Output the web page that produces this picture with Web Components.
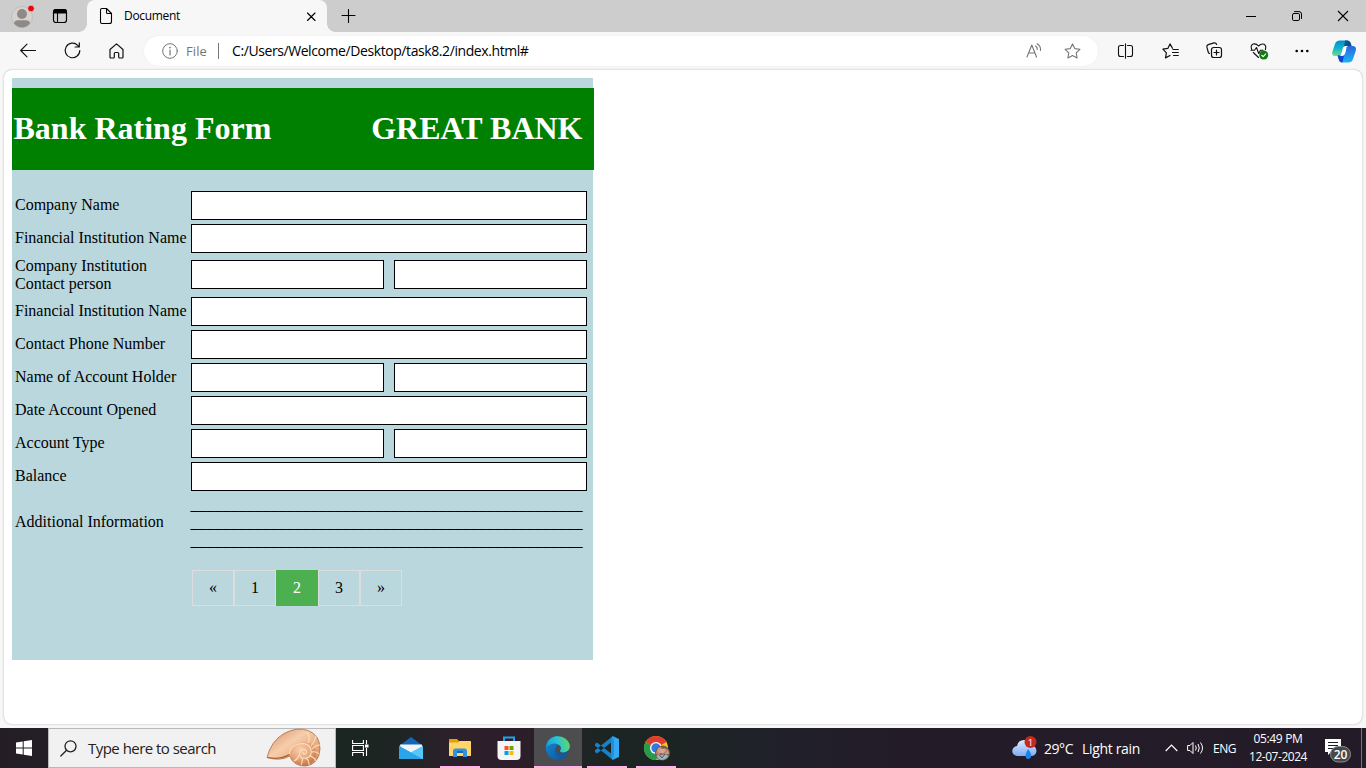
<!DOCTYPE html>
<html lang="en">
<head>
<meta charset="utf-8">
<title>Document</title>
<style>
html,body{margin:0;padding:0;width:1366px;height:768px;overflow:hidden;background:#f7f7f7}
</style>
</head>
<body>
<desktop-screen></desktop-screen>
<script>
const define=(name,css,html,setup)=>{
  const t=document.createElement('template');
  t.innerHTML=`<style>*{box-sizing:border-box}${css}</style>${html}`;
  customElements.define(name,class extends HTMLElement{
    connectedCallback(){
      if(this.shadowRoot)return;
      this.attachShadow({mode:'open'}).append(t.content.cloneNode(true));
      if(setup)setup(this,this.shadowRoot);
    }
  });
};

/* Text whose letter spacing is adjusted to occupy the width given in "w". */
define('fit-text',':host{display:block;white-space:pre;flex:none}span{display:inline-block}','<span><slot></slot></span>',(el,r)=>{
  const w=+el.getAttribute('w'),s=r.querySelector('span');
  const n=s.getBoundingClientRect().width;
  const len=el.textContent.length;
  el.style.width=w+'px';
  s.style.letterSpacing=((w-n)/len)+'px';
});

const S='fill="none" stroke="currentColor" stroke-linecap="round" stroke-linejoin="round"';
const ICONS={
person:[24,24,`<circle cx="12" cy="12" r="10.500" fill="#d6d3cf" stroke="#c2bfba"/><circle cx="12" cy="9" r="5" fill="#8d8a87"/><path d="M4 18.500Q4.500 15.200 8 15.200H16Q19.500 15.200 20 18.500Q16.500 22.500 12 22.500T4 18.500Z" fill="#8d8a87"/><circle cx="21" cy="3.500" r="3.300" fill="#e30613" stroke="#f1dede" stroke-width=".6"/>`],
workspaces:[16,16,`<rect x="1.500" y="1.500" width="13" height="13" rx="2.500" ${S} stroke-width="1.200"/><path d="M1 5.500V4Q1 1 4 1H12Q15 1 15 4V5.500Z" fill="#000"/><path d="M5.500 5V14.500" ${S} stroke-width="1.100"/>`],
page:[14,18,`<path d="M3 1.500H7.500L12.500 6.500V14.500Q12.500 16.500 10.500 16.500H3Q1.500 16.500 1.500 15V3Q1.500 1.500 3 1.500ZM7.500 1.500V5.500Q7.500 6.500 8.500 6.500H12.500" ${S} stroke-width="1.100"/>`],
close:[10,10,`<path d="M1.500 1L9 8.500M9 1L1.500 8.500" ${S} stroke-width="1.150"/>`],
plus:[14,14,`<path d="M7.500 .5V13.500M1 6.500H14" ${S} stroke-width="1.100"/>`],
min:[10,10,`<path d="M0 5.500H10" stroke="#000"/>`],
restore:[10,10,`<rect x=".5" y="2.500" width="7" height="7" rx="1.300" ${S}/><path d="M2.500 .6H7Q9.500 .6 9.500 3V7.500" ${S}/>`],
x:[10,10,`<path d="M0 0L10 10M10 0L0 10" stroke="#000" stroke-width="1.100"/>`],
back:[16,14,`<path d="M15.500 6.500H.8M7 .2L.7 6.500L7 12.800" ${S} stroke-width="1.100"/>`],
reload:[17,17,`<path d="M15.800 8.500A7.300 7.300 0 1 1 13.700 3.300L15.200 4.800M15.300 .8V5H11.100" ${S} stroke-width="1.200"/>`],
home:[15,16,`<path d="M1 6.500L7.500 .9L14 6.500V14Q14 15 13 15H10.500Q9.700 15 9.700 14V10.500Q9.700 9.500 8.700 9.500H6.300Q5.300 9.500 5.300 10.500V14Q5.300 15 4.300 15H2Q1 15 1 14Z" ${S} stroke-width="1.200"/>`],
info:[16,16,`<circle cx="8" cy="8" r="7.300" ${S} stroke-width="1"/><path d="M8 7V12" ${S} stroke-width="1.200"/><circle cx="8" cy="4.600" r=".9" fill="currentColor"/>`],
read:[16,16,`<path d="M1 14L5.800 2L10.500 14M2.700 10H9" ${S} stroke-width="1.100"/><path d="M9.500 3Q11.500 4 11.300 6.500M11 .8Q15 3 14.500 7.500" ${S} stroke-width="1.100"/>`],
star:[17,16,`<path d="M8.500 1L10.800 5.600L15.900 6.300L12.200 9.900L13.100 15L8.500 12.600L3.900 15L4.800 9.900L1.100 6.300L6.200 5.600Z" ${S} stroke-width="1.100"/>`],
split:[15,16,`<path d="M5.500 2.500H2.500Q.5 2.500 .5 4.500V11.500Q.5 13.500 2.500 13.500H5.500M9.500 2.500H12.500Q14.500 2.500 14.500 4.500V11.500Q14.500 13.500 12.500 13.500H9.500M7.500 .7V15.300" ${S} stroke-width="1.100"/>`],
favs:[17,16,`<path d="M10.500 5.300L8 .9L5.800 5.400L.9 6.200L4.400 9.800L3.500 14.900L8 12.500M11 6.500H16.300M10.500 9.500H16.300M11.500 12.500H16.300" ${S} stroke-width="1.200"/>`],
collections:[17,17,`<rect x="5.500" y="5.500" width="10" height="10" rx="2.300" ${S} stroke-width="1.200"/><path d="M10.500 8V13M8 10.500H13M3.500 11.500Q2.500 11.200 2.200 10L.9 5.200Q.5 3.300 2.200 2.600L8 .9Q9.900 .5 10.700 2.500" ${S} stroke-width="1.200"/>`],
health:[19,17,`<path d="M1.800 6.500Q0 2.500 3.200 1.100Q6 .2 8.500 3Q11.500 .2 14 1.200Q16.600 2.600 15.400 6.500M1 7.300H4.500L6.500 4.500L8.700 10.500L10.500 7.300H13M3.300 9.500L8.500 14.500" ${S} stroke-width="1.100"/><circle cx="13.700" cy="12" r="4.500" fill="#107c10"/><path d="M11.500 12L13.200 13.600L16 10.600" fill="none" stroke="#fff" stroke-width="1.100"/>`],
dots:[14,4,`<circle cx="1.700" cy="2" r="1.300"/><circle cx="7" cy="2" r="1.300"/><circle cx="12.300" cy="2" r="1.300"/>`],
copilot:[24,23,`<defs><linearGradient id="a" x1="0" y1="0" x2="0" y2="1"><stop stop-color="#008fd0"/><stop offset=".5" stop-color="#10b5c8"/><stop offset="1" stop-color="#78dc8c"/></linearGradient><linearGradient id="b" x1="0" y1="0" x2="0" y2="1"><stop stop-color="#2d65d8"/><stop offset="1" stop-color="#18b5fb"/></linearGradient></defs><path d="M8 .5H15Q18 .5 19 4L20 8H13L8 16H3Q-.5 16 .3 12L3 4Q4 .5 8 .5Z" fill="url(#a)"/><path d="M13 .5H15Q18 .5 19 4L20 8H12Z" fill="#08528c"/><path d="M6 15L13 14L15 6H21Q25 6.500 23.700 11L21 19Q20 22.500 16 22.500H10Q7.500 22.500 6.700 19Z" fill="url(#b)"/><path d="M5.500 15.500H12L10.500 22.500Q7.500 22.500 6.600 19Z" fill="#1445ce"/><path d="M11 7.500Q12 6 13.500 6H16Q14.500 6.500 14 8.500L12.700 14Q12 16 10 16H7.500Q9 15.500 9.500 13.500Z" fill="#fff"/>`],
win:[16,16,`<path d="M0 2.400L6.700 1.400V7.500H0ZM7.700 1.300L16 0V7.500H7.700ZM0 8.500H6.700V14.600L0 13.600ZM7.700 8.500H16V16L7.700 14.700Z" fill="#fff"/>`],
search:[17,17,`<circle cx="10.500" cy="6.300" r="5.500" ${S} stroke-width="1.300"/><path d="M6.600 10.200L.8 16" ${S} stroke-width="1.300"/>`],
shell:[56,40,`<defs><radialGradient id="s" cx=".4" cy=".3" r=".8"><stop stop-color="#f9cfae"/><stop offset=".5" stop-color="#e9a57f"/><stop offset="1" stop-color="#b8653d"/></radialGradient><linearGradient id="t" x1="0" y1="0" x2="1" y2="1"><stop stop-color="#d18d61"/><stop offset=".4" stop-color="#f7cdac"/><stop offset="1" stop-color="#d88658"/></linearGradient></defs><path d="M1 29.500Q5 13 18 5.500Q31-1.500 42 2.500Q54 7 54 21Q53 36 40 38Q28 38.500 23.500 28Q15 33.500 1 29.500Z" fill="url(#t)" stroke="#ae6d43" stroke-width=".8"/><path d="M23.500 28Q23 17 34 15Q43 12 48 19Q52 25 48 32Q44 38 38 38Q28 37 23.500 28Z" fill="url(#s)"/><path d="M23.500 26Q24 18 33 16Q43 14 45 22Q46 29 40 30Q34 31 33.500 26Q34 21 38.500 21.500Q42 23 39.500 26Q37 27 37 24M42 15Q45 10 41 4M45 18Q49 13 50 8M46 21Q50 17 54 17M46 24Q50 23 53 26M44 28Q48 29 50 33M40 30Q43 32 43 37M36 30Q37 33 35 37M33 27Q32 31 28 33" fill="none" stroke="#fbe3b4" stroke-width="1.050"/><path d="M1.500 29.500Q14 32 23.500 26.500" fill="none" stroke="#a65e35" stroke-width="1.200"/>`],
task:[17,16,`<path d="M.6 0V3.500H11.400V0M.6 16V12.500H11.400V16M.6 5.500H11.400V10.500H.6ZM14.500 0V4M14.500 8V16" fill="none" stroke="#fff" stroke-width="1.100"/><rect x="13" y="4.500" width="3.500" height="3" fill="#fff"/>`],
mail:[24,24,`<path d="M0 10L12 1L24 10V21H0Z" fill="#1267b6"/><path d="M1 8.500H23V15L12 21L2 15Z" fill="#f4f4f6"/><path d="M0 10L12 16.500L24 10V23H0Z" fill="#37b7f2"/><path d="M0 10L24 23H0Z" fill="#2ba4ea"/><path d="M24 10V23L12 16.500Z" fill="#55c8f8"/>`],
folder:[22,20,`<path d="M0 1.500Q0 1 .7 1H8L10 3H21Q22 3 22 4V18H0Z" fill="#e6a000"/><path d="M0 4.500H9L11 3H21Q22 3 22 4V17Q22 18 21 18H0Z" fill="#ffd667"/><path d="M4 19V13Q4 10.500 6.500 10.500H16Q18 10.500 18 13V19H14V15H8V19Z" fill="#3193dc"/><path d="M8 13H14V15H8Z" fill="#166bb2"/>`],
store:[24,24,`<path d="M7 6V1.500H17V6" fill="none" stroke="#20a2e5" stroke-width="2"/><path d="M.5 5H23.500V20Q23.500 24 19.500 24H4.500Q.5 24 .5 20Z" fill="#f5f5f5"/><rect x="7.500" y="10" width="4" height="4" fill="#f35325"/><rect x="12.500" y="10" width="4" height="4" fill="#67a900"/><rect x="7.500" y="15" width="4" height="4" fill="#00a1e9"/><rect x="12.500" y="15" width="4" height="4" fill="#ffb900"/>`],
edge:[24,24,`<defs><linearGradient id="e" x1="0" y1=".5" x2="1" y2=".3"><stop stop-color="#1b9de2"/><stop offset=".5" stop-color="#2ac4d6"/><stop offset="1" stop-color="#63dc50"/></linearGradient><linearGradient id="f" x1="0" y1="0" x2="1" y2="1"><stop stop-color="#168ed8"/><stop offset="1" stop-color="#0b4e93"/></linearGradient></defs><path d="M12 0A12 12 0 1 0 22.400 17.500Q23 16 21 16.500Q24 15 22 8Z" fill="url(#f)"/><path d="M.1 11Q1 2 10 .2Q20-.5 23.500 8Q25 14 19.500 16Q16 17 14 15.400Q13.500 14.800 14.500 13.500Q15.500 10.500 12.500 8.500Q6 5.500 .1 11Z" fill="url(#e)"/><path d="M9.500 13Q9.500 10 11.500 9.500Q14.700 9 14.900 12Q14.900 13.500 14 14.500Q13.500 16 16 16.800Q19 17.500 22.400 15.700L22.400 17.300Q20 18.800 16.500 18.500Q10 17.500 9.500 13Z" fill="#4c4c4e"/><path d="M9 12.500Q8 20 15.500 21.500Q19 21 21.500 18.300Q17 20 13.500 18Q9.800 16 9 12.500Z" fill="#0d5ca6"/>`],
code:[24,24,`<path d="M0 8L2 6.500L18 19V24L0 9.700ZM0 16L2 17.500L18 5V0L0 14.300Z" fill="#1682cb"/><path d="M17.500 0L24 3V21L17.500 24Z" fill="#32a9f4"/><path d="M17.500 0L19 5V19L17.500 24L16 22V2Z" fill="#238fd6"/>`],
chrome:[26,25,`<circle cx="12" cy="12" r="12" fill="#fbc116"/><path d="M12 12L1.600 6A12 12 0 0 1 22.400 6Z" fill="#e33b2e"/><path d="M12 12L1.600 6A12 12 0 0 0 12 24L17 15Z" fill="#269b48"/><circle cx="12" cy="12" r="6" fill="#fff"/><circle cx="12" cy="12" r="4.700" fill="#3478e5"/><circle cx="18.500" cy="17" r="7.500" fill="#755b4d"/><path d="M14 12L17 11L18 16L14 19L12 17ZM20 12L24 14L25 18L21 18Z" fill="#c99c88"/><circle cx="18.500" cy="15" r="2.500" fill="#d6a98e"/><path d="M12.500 20Q14 17 17 19Q22 17 24.500 20Q22 23.500 18 24Q14 23.500 12.500 20Z" fill="#9bb9b9"/><path d="M13 16L16 20M20 18L23 14" stroke="#ca7470" stroke-width="1.500"/><path d="M15.500 19L18 22L21 18" stroke="#504d78" fill="none"/>`],
weather:[28,24,`<defs><linearGradient id="w" x1="0" y1="0" x2="0" y2="1"><stop stop-color="#dceaff"/><stop offset="1" stop-color="#7facf3"/></linearGradient></defs><path d="M5 20Q0 19 .3 14.500Q1 10.500 5 10Q6 4 12 4Q17 4 18.500 9Q24 9.500 24.500 15Q24 20 19 20Z" fill="url(#w)"/><path d="M16 13Q20 18 19 21Q17.500 24 14.500 22.500Q12 20 16 13Z" fill="#1686ea"/><circle cx="18.500" cy="6" r="6" fill="#c42b1c"/><text x="18.500" y="9.500" text-anchor="middle" font-family="Open Sans,sans-serif" font-size="9.500" fill="#fff">1</text>`],
caret:[13,8,`<path d="M.7 7L6.500 1L12.300 7" fill="none" stroke="#fff" stroke-width="1.200"/>`],
speaker:[17,14,`<path d="M.6 4.500H3L6 1.500V12.500L3 9.500H.6Z" fill="none" stroke="#fff"/><path d="M8.500 4.500Q10 7 8.500 9.500M11 3Q13.500 7 11 11M13.500 1.500Q17.500 7 13.500 12.500" fill="none" stroke="#fff"/>`],
notif:[27,26,`<path d="M0 1H16V14H6L3 17V14H0Z" fill="#fff"/><path d="M3 4.500H13M3 7.500H13M3 10.500H9" stroke="#211c28"/><rect x="5.500" y="8.500" width="20" height="15.500" rx="7.700" fill="#46484b" stroke="#898b8d"/><text x="15.500" y="20.500" text-anchor="middle" font-family="Open Sans,sans-serif" font-weight="600" font-size="12" fill="#fff">20</text>`]
};
define('ui-icon',':host{display:block;flex:none}svg{display:block;overflow:visible}','<div></div>',(el,r)=>{
  const [w,h,b]=ICONS[el.getAttribute('name')];
  r.querySelector('div').innerHTML=`<svg width="${w}" height="${h}" viewBox="0 0 ${w} ${h}">${b}</svg>`;
});

define('title-bar',`:host{display:flex;height:32px;background:#cdcdcd;color:#000;font:12px "Open Sans",sans-serif;align-items:center}
.tab{width:240px;height:32px;background:#f7f7f7;border-radius:8px 8px 0 0;display:flex;align-items:center;padding-left:12px;margin-left:19px;position:relative}
.tab::before,.tab::after{content:"";position:absolute;bottom:0;width:8px;height:8px}
.tab::before{left:-8px;background:radial-gradient(circle at 0 0,transparent 7.500px,#f7f7f7 8px)}
.tab::after{right:-8px;background:radial-gradient(circle at 100% 0,transparent 7.500px,#f7f7f7 8px)}`,
`<ui-icon name="person" style="margin-left:10px;margin-top:1px"></ui-icon><ui-icon name="workspaces" style="margin-left:18px"></ui-icon>
<div class="tab"><ui-icon name="page"></ui-icon><fit-text w="56" style="margin-left:11px;margin-top:-1px">Document</fit-text><ui-icon name="close" style="margin-left:126px;margin-top:1px"></ui-icon></div>
<ui-icon name="plus" style="margin-left:14px"></ui-icon>
<ui-icon name="min" style="margin-left:auto"></ui-icon><ui-icon name="restore" style="margin-left:36px"></ui-icon><ui-icon name="x" style="margin:0 18px 0 36px"></ui-icon>`);

define('tool-bar',`:host{display:flex;height:38px;align-items:center;background:#f7f7f7;font:14px "Open Sans",sans-serif;color:#111}
.address{display:flex;align-items:center;width:954px;height:30px;border-radius:15px;background:#fff;margin-left:20px;padding:0 17px 0 18px;color:#767676;box-shadow:0 0 2px #e8e8e8}
i{width:1px;height:16px;background:#767676;margin:0 13px 0 11px}`,
`<ui-icon name="back" style="margin-left:20px"></ui-icon><ui-icon name="reload" style="margin-left:27.500px;margin-top:-1px"></ui-icon><ui-icon name="home" style="margin-left:28.500px;margin-top:-1px"></ui-icon>
<div class="address"><ui-icon name="info"></ui-icon><fit-text w="21" style="font-size:13px;margin-left:8px">File</fit-text><i></i><fit-text w="296.500" style="color:#000;margin-top:-1px">C:/Users/Welcome/Desktop/task8.2/index.html#</fit-text><ui-icon name="read" style="margin-left:auto;margin-top:-1px"></ui-icon><ui-icon name="star" style="margin-left:22px"></ui-icon></div>
<ui-icon name="split" style="margin-left:20px"></ui-icon><ui-icon name="favs" style="margin-left:29px"></ui-icon><ui-icon name="collections" style="margin-left:27px;margin-top:-1px"></ui-icon><ui-icon name="health" style="margin-left:27px"></ui-icon><ui-icon name="dots" style="margin-left:26px"></ui-icon><ui-icon name="copilot" style="margin-left:23px"></ui-icon>`);

define('form-row',`:host{display:grid;grid-template-columns:176px 396px;height:33px;font:16px/18px "Liberation Serif",serif}
:host([tall]){height:40px}
.label{align-self:center;white-space:pre-line;padding-bottom:2px}
:host([tall]) .label{padding:0}
.fields{display:flex;gap:10px;padding-top:2px}
:host([tall]) .fields{padding-top:5px}
.fields div{height:29px;flex:1;border:1px solid #000;background:#fff}`,
`<div class="label"><slot></slot></div><div class="fields"><div></div></div>`,(el,r)=>{
  if(el.hasAttribute('split'))r.querySelector('.fields').append(document.createElement('div'));
});

define('page-nav',`:host{display:flex;font:16px/18px "Liberation Serif",serif}
span{border:1px solid #ddd;padding:8px 16px;width:42px;text-align:center;color:#000}.on{background:#4caf50;border-color:#4caf50;color:#fff}`,
`<span>«</span><span>1</span><span class="on">2</span><span>3</span><span>»</span>`);

define('bank-form',`:host{display:block;width:581px;height:582px;background:#bad7dd;padding-top:10px;font:16px/18px "Liberation Serif",serif;color:#000}
header{display:flex;width:582px;height:82px;background:#008000;align-items:center;justify-content:space-between;padding:0 11.500px 2px 1.500px;color:#fff}
h1{margin:0;font-size:32px;line-height:37px;white-space:nowrap}
main{padding:19px 0 0 3px}
.extra{display:grid;grid-template-columns:175.500px 392px;height:59px;align-items:center;align-content:start;padding-top:2px}
.info{padding-bottom:1px}
.lines{line-height:18px;white-space:pre;padding-top:1px}
page-nav{margin:18px 0 0 177px}`,
`<header><h1>Bank Rating Form</h1><h1>GREAT BANK</h1></header><main>
<form-row>Company Name</form-row><form-row>Financial Institution Name</form-row><form-row tall split>Company Institution
Contact person</form-row><form-row>Financial Institution Name</form-row><form-row>Contact Phone Number</form-row><form-row split>Name of Account Holder</form-row><form-row>Date Account Opened</form-row><form-row split>Account Type</form-row><form-row>Balance</form-row>
<div class="extra"><div class="info">Additional Information</div><div class="lines"></div></div><page-nav></page-nav></main>`,(el,r)=>{
  r.querySelector('.lines').textContent=Array(3).fill('_'.repeat(49)).join('\n');
});

define('app-button',`:host{display:flex;width:48px;height:40px;margin-right:1px;align-items:center;justify-content:center;flex:none;position:relative}
:host([active]){background:#4d4d4f}
:host([open])::after{content:"";position:absolute;bottom:0;left:4px;right:4px;height:2px;background:#ffb3e8}
:host([active])::after{left:0;right:0}`,`<slot></slot>`);

define('task-bar',`:host{display:flex;height:40px;align-items:center;background:linear-gradient(90deg,#241d25 0,#231e25 48px,#1b2522 336px,#1d2523 395px,#2d202b 450px,#2c1e2a 520px,#1d2523 600px,#1c2423 680px,#20202a 780px,#231c28 900px,#241b28 1366px);color:#fff;font:14px "Open Sans",sans-serif}
.start{width:48px;display:flex;justify-content:center}
.search{width:288px;height:40px;background:#f1f1f1;border:1px solid #b9b9b9;display:flex;align-items:center;padding-left:11px;color:#222;font-size:15px}
.apps{display:flex}.clock{font-size:12px;line-height:18px;display:flex;flex-direction:column;align-items:center;width:58px;margin-left:13px}
i{width:1px;height:40px;background:#77727a;margin-left:9px}`,
`<div class="start"><ui-icon name="win"></ui-icon></div><div class="search"><ui-icon name="search"></ui-icon><fit-text w="128" style="margin-left:11px">Type here to search</fit-text><ui-icon name="shell" style="margin-left:50px"></ui-icon></div>
<div class="apps"><app-button style="margin-right:3px"><ui-icon name="task"></ui-icon></app-button><app-button><ui-icon name="mail"></ui-icon></app-button><app-button open><ui-icon name="folder"></ui-icon></app-button><app-button><ui-icon name="store"></ui-icon></app-button><app-button open active><ui-icon name="edge"></ui-icon></app-button><app-button open><ui-icon name="code"></ui-icon></app-button><app-button open><ui-icon name="chrome" style="margin-left:2px"></ui-icon></app-button></div>
<ui-icon name="weather" style="margin-left:331px"></ui-icon><fit-text w="29" style="margin-left:4px">29°C</fit-text><fit-text w="58" style="margin-left:9px">Light rain</fit-text><ui-icon name="caret" style="margin-left:25px"></ui-icon><ui-icon name="speaker" style="margin-left:9px"></ui-icon><fit-text w="23" style="margin-left:9px;font-size:12px">ENG</fit-text>
<div class="clock"><fit-text w="49">05:49 PM</fit-text><fit-text w="58">12-07-2024</fit-text></div><ui-icon name="notif" style="margin-left:18px;margin-top:5px"></ui-icon><i></i>`);

define('desktop-screen',`:host{display:flex;flex-direction:column;width:1366px;height:768px;background:#f7f7f7}
.view{width:1358px;height:654px;margin:0 4px 4px;border-radius:8px;background:#fff;padding:8px;box-shadow:0 0 2px #aaa}`,
`<title-bar></title-bar><tool-bar></tool-bar><div class="view"><bank-form></bank-form></div><task-bar></task-bar>`);
</script>
</body>
</html>
